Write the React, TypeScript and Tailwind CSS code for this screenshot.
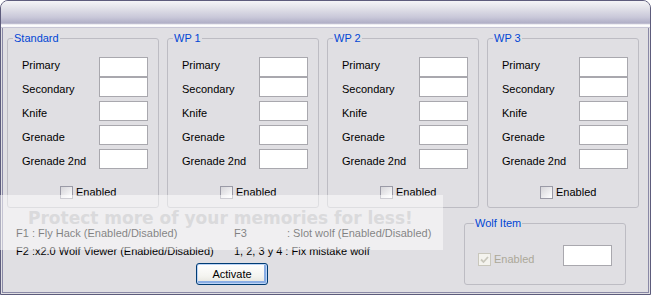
import clsx from "clsx";

const armas = ["Primary", "Secondary", "Knife", "Grenade", "Grenade 2nd"];
const grupos = ["Standard", "WP 1", "WP 2", "WP 3"];

function Check({ checked = false, disabled = false }: { checked?: boolean; disabled?: boolean }) {
  return (
    <span
      className={clsx(
        "flex h-[13px] w-[13px] shrink-0 items-center justify-center border",
        disabled
          ? "border-[#c9c7bc] bg-[#f4f3ee]"
          : "border-[#9a9aa6] bg-[linear-gradient(135deg,#d6d5d9_0%,#f2f2f4_70%,#ffffff_100%)]",
      )}
    >
      {checked && (
        <svg width="9" height="9" viewBox="0 0 9 9">
          <path d="M1 4.5 L3.5 7 L8 2" fill="none" stroke="#c9c7bc" strokeWidth="1.8" />
        </svg>
      )}
    </span>
  );
}

function Grupo({ titulo }: { titulo: string }) {
  return (
    <fieldset className="w-[152px] shrink-0 rounded-[3px] border border-[#bdbcc3] pb-[8px] pl-[14px] pr-[10px]">
      <legend className="-ml-[9px] px-[1px] leading-[14px] text-[#0046d5]">{titulo}</legend>
      {/* rótulos em passo de 24px, campos ligeiramente deslocados */}
      <div className="mt-[8px] flex justify-between">
        <div className="flex flex-col">
          {armas.map((a) => (
            <span key={a} className="h-[24px] leading-[24px]">
              {a}
            </span>
          ))}
        </div>
        <div className="flex flex-col pt-[4px]">
          {armas.map((a, i) => (
            <span
              key={a}
              className={clsx(
                "block h-[20px] w-[49px] border border-[#a9a8ae] bg-white",
                i > 1 && "mt-[4px]",
              )}
            />
          ))}
        </div>
      </div>
      <div className="ml-[38px] mt-[13px] flex h-[13px] items-center gap-[3px] leading-[13px]">
        <Check />
        <span>Enabled</span>
      </div>
    </fieldset>
  );
}

export default function App() {
  return (
    <div className="relative h-[295px] w-[651px] overflow-hidden bg-white font-['Liberation_Sans',Arial,sans-serif] text-[11px] text-black">
      <div className="flex h-full flex-col overflow-hidden rounded-t-[8px] border border-[#5d5c7c] bg-[#e0dfe3]">
        {/* Barra de título */}
        <div className="h-[27px] shrink-0 bg-[linear-gradient(to_bottom,#f4f4f7_0%,#e3e3ea_25%,#c9c8d9_60%,#b2b1c8_80%,#c0bfd2_84%,#fbfbfc_88%,#ffffff_94%,#aeadc2_100%)]" />

        {/* Corpo */}
        <div className="mx-[1px] mb-[1px] flex flex-1 flex-col border-x border-b border-[#8a89a6]">
          <div className="mt-[3px] flex gap-[8px] pl-[4px]">
            {grupos.map((g) => (
              <Grupo key={g} titulo={g} />
            ))}
          </div>

          <div className="flex">
            <div className="w-[461px] shrink-0 pl-[13px]">
              <div className="mt-[16px] grid grid-cols-[218px_auto] leading-[18px]">
                <span>F1 : Fly Hack (Enabled/Disabled)</span>
                <span>
                  <span className="inline-block w-[53px]">F3</span>: Slot wolf (Enabled/Disabled)
                </span>
                <span>F2 :x2.0 Wolf Viewer (Enabled/Disabled)</span>
                <span>1, 2, 3 y 4 : Fix mistake wolf</span>
              </div>
              <button className="ml-[180px] mt-[3px] flex h-[22px] w-[72px] items-center justify-center rounded-[3px] border border-[#003c74] bg-[linear-gradient(to_bottom,#ffffff_0%,#f4f4f0_60%,#e3e2da_100%)] shadow-[inset_0_0_0_1px_#bcd4f6,inset_-1px_-1px_0_2px_#89ade4]">
                Activate
              </button>
            </div>

            <fieldset className="mt-[8px] w-[162px] shrink-0 rounded-[3px] border border-[#bdbcc3] pb-[17px] pl-[13px] pr-[13px]">
              <legend className="-ml-[4px] px-[1px] leading-[14px] text-[#0046d5]">Wolf Item</legend>
              <div className="mt-[15px] flex items-end justify-between">
                <div className="flex h-[13px] items-center gap-[3px] leading-[13px] text-[#aca899]">
                  <Check checked disabled />
                  <span>Enabled</span>
                </div>
                <span className="block h-[21px] w-[49px] border border-[#a9a8ae] bg-white" />
              </div>
            </fieldset>
          </div>
        </div>
      </div>

      {/* Marca d'água sobreposta */}
      <div className="absolute left-0 top-[195px] h-[55px] w-[443px] bg-white/50">
        <span className="absolute left-[28px] top-[15px] whitespace-nowrap font-['DejaVu_Sans',sans-serif] text-[17px] font-bold leading-[17px] text-[#dadadc]">
          Protect more of your memories for less!
        </span>
      </div>
    </div>
  );
}
